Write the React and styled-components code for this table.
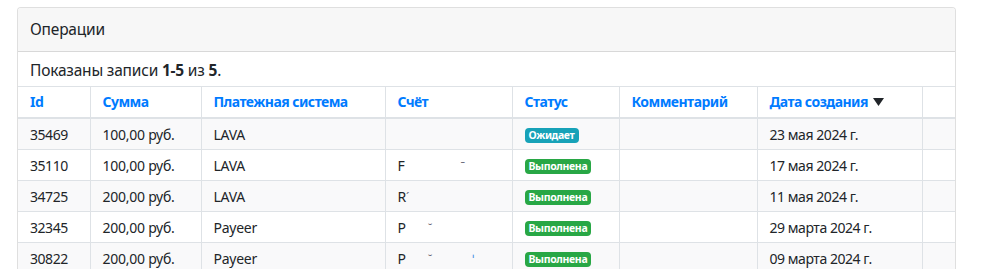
import React from 'react';
import styled, { createGlobalStyle } from 'styled-components';

const GlobalStyle = createGlobalStyle`
  html, body {
    margin: 0;
    padding: 0;
    background: #fff;
  }
  body {
    font-family: "Noto Sans", "Open Sans", "Liberation Sans", sans-serif;
    font-size: 14px;
    color: #212529;
  }
`;

const Page = styled.div`
  padding: 7px 36px 0 17px;
`;

const Card = styled.div`
  border: 1px solid rgba(0, 0, 0, 0.125);
  border-radius: 4px;
  background: #fff;
  overflow: hidden;
`;

const CardHeader = styled.div`
  background: #f7f7f7;
  border-bottom: 1px solid rgba(0, 0, 0, 0.125);
  padding: 10px 12px;
  font-size: 15.5px;
  line-height: 23px;
  letter-spacing: -0.2px;
  color: #212529;
`;

const Summary = styled.div`
  padding: 7px 12px 5px;
  font-size: 15.5px;
  line-height: 22px;
  letter-spacing: -0.2px;
  b {
    font-weight: 700;
  }
`;

const Table = styled.table`
  width: 100%;
  table-layout: fixed;
  border-collapse: collapse;
  line-height: 21px;
  letter-spacing: -0.25px;
`;

const Th = styled.th`
  text-align: left;
  font-weight: 700;
  letter-spacing: -0.55px;
  padding: 4px 12px 5px;
  border: 1px solid #dee2e6;
  border-bottom: 2px solid #dee2e6;
  white-space: nowrap;
  &:first-child { border-left: 0; }
  &:last-child { border-right: 0; }
`;

const Row = styled.tr`
  background: ${p => (p.$odd ? '#f9f9fa' : '#fff')};
`;

const Td = styled.td`
  height: 21px;
  padding: 5px 12px 4px;
  border: 1px solid #dee2e6;
  white-space: nowrap;
  overflow: hidden;
  letter-spacing: ${p => (p.$tight ? '-0.45px' : '-0.25px')};
  &:first-child { border-left: 0; }
  &:last-child { border-right: 0; }
`;

const SortLink = styled.a`
  color: #007bff;
  text-decoration: none;
  display: inline-flex;
  align-items: center;
  gap: 5px;
`;

const Arrow = styled.svg`
  display: block;
  margin-top: 1px;
`;

const Badge = styled.span`
  display: inline-block;
  vertical-align: 1px;
  padding: 0 4px;
  font-size: 10.5px;
  line-height: 15px;
  font-weight: 700;
  letter-spacing: -0.35px;
  color: #fff;
  border-radius: 4px;
  background: ${p => (p.$kind === 'info' ? '#17a2b8' : '#28a745')};
`;

const Trace = styled.span`
  display: inline-block;
  margin-left: ${p => p.$gap}px;
  color: ${p => (p.$blue ? '#4a90e2' : '#6a6a78')};
  font-size: 12px;
  line-height: 0;
  vertical-align: baseline;
`;

const columns = [
  { title: 'Id', width: 72 },
  { title: 'Сумма', width: 111 },
  { title: 'Платежная система', width: 184 },
  { title: 'Счёт', width: 127 },
  { title: 'Статус', width: 107 },
  { title: 'Комментарий', width: 138 },
  { title: 'Дата создания', width: 165, sorted: true },
  { title: '', width: 34 },
];

const rows = [
  { id: 35469, sum: '100,00 руб.', sys: 'LAVA', acc: '', traces: [], status: 'Ожидает', kind: 'info', date: '23 мая 2024 г.' },
  { id: 35110, sum: '100,00 руб.', sys: 'LAVA', acc: 'F', traces: [{ gap: 56, ch: 'ˉ' }], status: 'Выполнена', date: '17 мая 2024 г.' },
  { id: 34725, sum: '200,00 руб.', sys: 'LAVA', acc: 'R', traces: [{ gap: 0, ch: 'ˊ' }], status: 'Выполнена', date: '11 мая 2024 г.' },
  { id: 32345, sum: '200,00 руб.', sys: 'Payeer', acc: 'P', traces: [{ gap: 22, ch: '˘' }], status: 'Выполнена', date: '29 марта 2024 г.' },
  { id: 30822, sum: '200,00 руб.', sys: 'Payeer', acc: 'P', traces: [{ gap: 22, ch: '˘' }, { gap: 40, ch: 'ˈ', blue: true }], status: 'Выполнена', date: '09 марта 2024 г.' },
];

const App = () => (
  <>
    <GlobalStyle />
    <Page>
      <Card>
        <CardHeader>Операции</CardHeader>
        <Summary>Показаны записи <b>1-5</b> из <b>5</b>.</Summary>
        <Table>
          <colgroup>
            {columns.map((c, i) => <col key={i} style={{ width: c.width }} />)}
          </colgroup>
          <thead>
            <tr>
              {columns.map((c, i) => (
                <Th key={i}>
                  {c.title && (
                    <SortLink href="#">
                      {c.title}
                      {c.sorted && (
                        <Arrow width="11" height="8" viewBox="0 0 11 8">
                          <path d="M0 0 H11 L5.5 8 Z" fill="#212529" />
                        </Arrow>
                      )}
                    </SortLink>
                  )}
                </Th>
              ))}
            </tr>
          </thead>
          <tbody>
            {rows.map((r, i) => (
              <Row key={r.id} $odd={i % 2 === 0}>
                <Td $tight>{r.id}</Td>
                <Td>{r.sum}</Td>
                <Td>{r.sys}</Td>
                <Td>
                  {r.acc}
                  {r.traces.map((t, j) => (
                    <Trace key={j} $gap={t.gap} $blue={t.blue}>{t.ch}</Trace>
                  ))}
                </Td>
                <Td><Badge $kind={r.kind}>{r.status}</Badge></Td>
                <Td></Td>
                <Td $tight>{r.date}</Td>
                <Td></Td>
              </Row>
            ))}
          </tbody>
        </Table>
      </Card>
    </Page>
  </>
);

export default App;
